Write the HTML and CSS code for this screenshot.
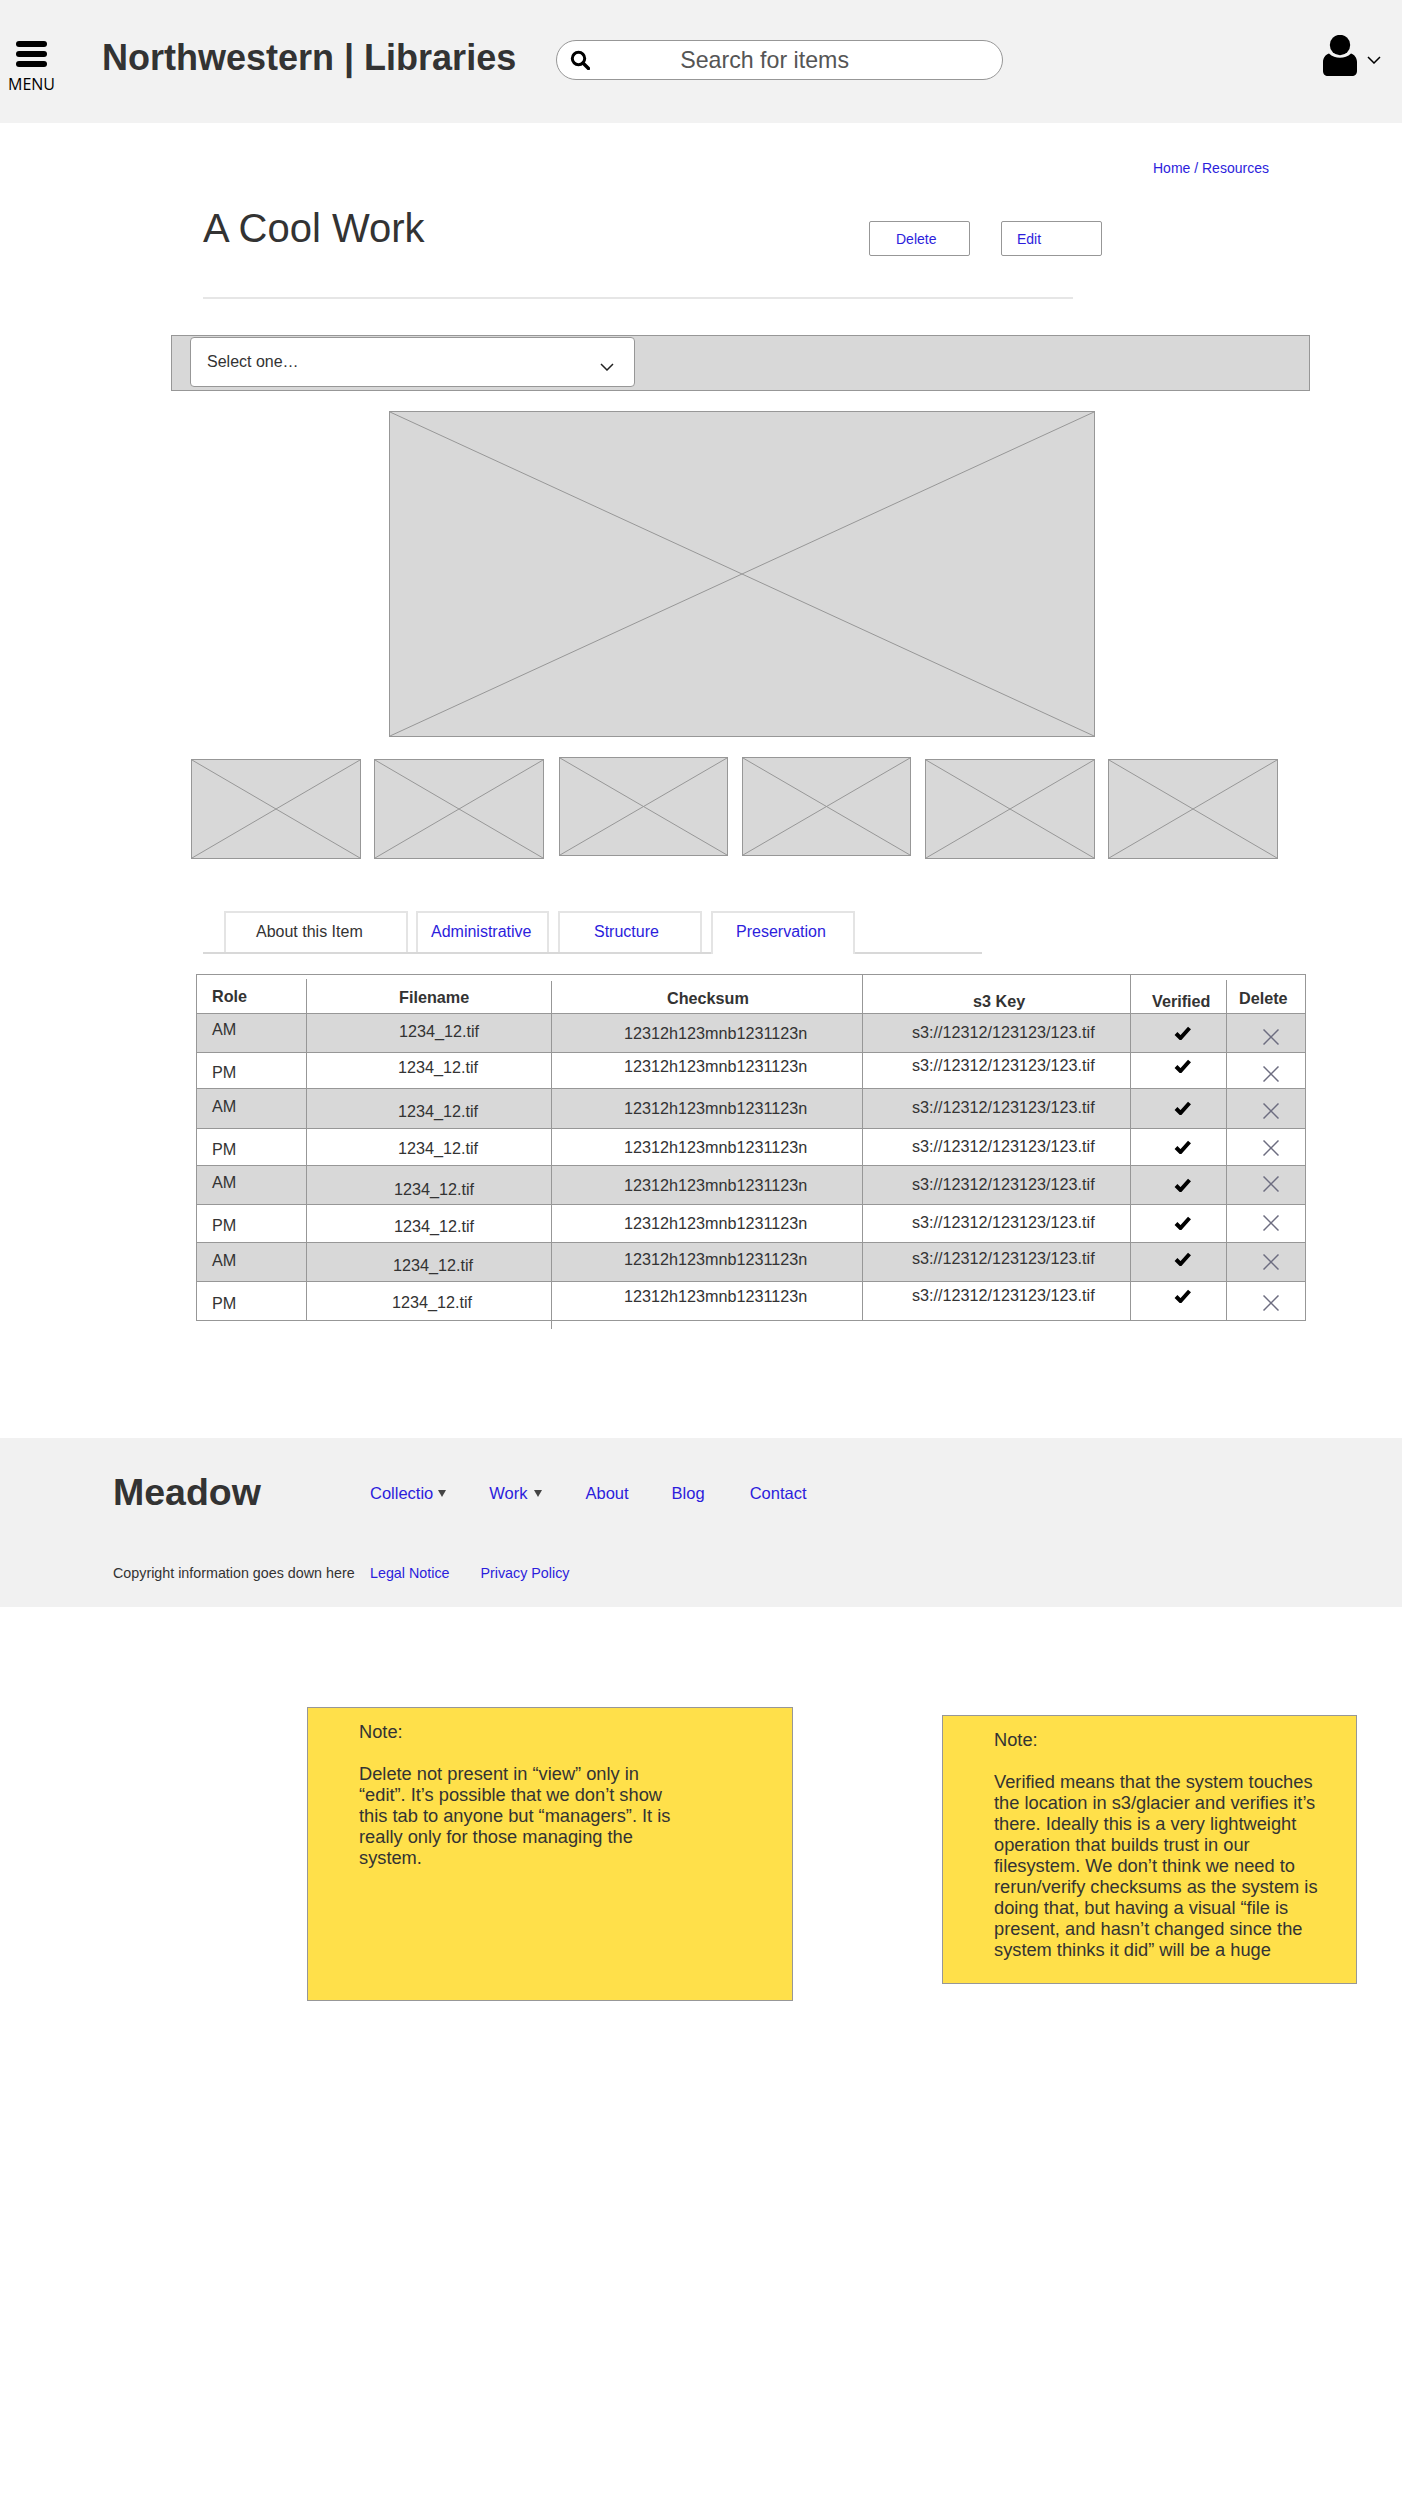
FILE: index.html
```html
<!DOCTYPE html>
<html lang="en">
<head>
<meta charset="UTF-8">
<meta name="viewport" content="width=device-width, initial-scale=1.0">
<title>A Cool Work</title>
<link rel="stylesheet" href="styles.css">
</head>
<body>
<header class="site-header">
  <div class="menu">
    <div class="menu-bars"><span></span><span></span><span></span></div>
    <div class="menu-label">MENU</div>
  </div>
  <div class="site-title">Northwestern | Libraries</div>
  <div class="search">
    <svg class="search-icon" viewBox="0 0 20 20" width="20" height="20">
      <circle cx="8.5" cy="8.5" r="6.2" fill="none" stroke="#000" stroke-width="3"/>
      <line x1="13" y1="13" x2="18.5" y2="18.5" stroke="#000" stroke-width="3.4" stroke-linecap="round"/>
    </svg>
    <span class="search-text">Search for items</span>
  </div>
  <div class="user">
    <svg viewBox="0 0 34 41" width="34" height="41">
      <circle cx="17" cy="10" r="10.2" fill="#000"/>
      <path d="M6 18.5 C9 21.5 13 22.8 17 22.8 C21 22.8 25 21.5 28 18.5 C31.5 19.5 34 23 34 27 L34 36 C34 39 32 41 29 41 L5 41 C2 41 0 39 0 36 L0 27 C0 23 2.5 19.5 6 18.5 Z" fill="#000"/>
    </svg>
    <svg class="user-chevron" viewBox="0 0 14 8" width="14" height="8">
      <polyline points="1,1 7,7 13,1" fill="none" stroke="#000" stroke-width="1.5"/>
    </svg>
  </div>
</header>

<main>
  <div class="crumb"><a>Home / Resources</a></div>
  <div class="title-row">
    <h1>A Cool Work</h1>
    <a class="btn btn-delete">Delete</a>
    <a class="btn btn-edit">Edit</a>
  </div>
  <div class="divider"></div>

  <div class="select-bar">
    <div class="select">
      <span>Select one…</span>
      <svg viewBox="0 0 14 8" width="14" height="8">
        <polyline points="1,1 7,7 13,1" fill="none" stroke="#222" stroke-width="1.5"/>
      </svg>
    </div>
  </div>

  <div class="ph ph-main">
    <svg viewBox="0 0 100 100" preserveAspectRatio="none">
      <line x1="0" y1="0" x2="100" y2="100"/><line x1="100" y1="0" x2="0" y2="100"/>
    </svg>
  </div>

  <div class="thumbs">
    <div class="ph thumb low"><svg viewBox="0 0 100 100" preserveAspectRatio="none"><line x1="0" y1="0" x2="100" y2="100"/><line x1="100" y1="0" x2="0" y2="100"/></svg></div>
    <div class="ph thumb low"><svg viewBox="0 0 100 100" preserveAspectRatio="none"><line x1="0" y1="0" x2="100" y2="100"/><line x1="100" y1="0" x2="0" y2="100"/></svg></div>
    <div class="ph thumb third"><svg viewBox="0 0 100 100" preserveAspectRatio="none"><line x1="0" y1="0" x2="100" y2="100"/><line x1="100" y1="0" x2="0" y2="100"/></svg></div>
    <div class="ph thumb fourth"><svg viewBox="0 0 100 100" preserveAspectRatio="none"><line x1="0" y1="0" x2="100" y2="100"/><line x1="100" y1="0" x2="0" y2="100"/></svg></div>
    <div class="ph thumb low fifth"><svg viewBox="0 0 100 100" preserveAspectRatio="none"><line x1="0" y1="0" x2="100" y2="100"/><line x1="100" y1="0" x2="0" y2="100"/></svg></div>
    <div class="ph thumb low"><svg viewBox="0 0 100 100" preserveAspectRatio="none"><line x1="0" y1="0" x2="100" y2="100"/><line x1="100" y1="0" x2="0" y2="100"/></svg></div>
  </div>

  <nav class="tabs">
    <span class="tab tab-about">About this Item</span>
    <a class="tab tab-admin">Administrative</a>
    <a class="tab tab-structure">Structure</a>
    <a class="tab tab-preservation">Preservation</a>
  </nav>

  <div class="files">
    <div class="row head">
      <div class="cell role t12"><b>Role</b></div>
      <div class="cell h-file"><b>Filename</b></div>
      <div class="cell h-sum"><b>Checksum</b></div>
      <div class="cell h-key t17"><b>s3 Key</b></div>
      <div class="cell h-ok t17"><b>Verified</b></div>
      <div class="cell h-del"><b>Delete</b></div>
    </div>
    <div class="row">
      <div class="cell role t6">AM</div>
      <div class="cell file f92 t8">1234_12.tif</div>
      <div class="cell sum t10">12312h123mnb1231123n</div>
      <div class="cell key t9">s3://12312/123123/123.tif</div>
      <div class="cell ok t12"><svg viewBox="0 0 17 14" width="17" height="14"><polyline points="2,7.5 6.5,12 15.5,2"/></svg></div>
      <div class="cell del t15"><svg viewBox="0 0 16 16" width="16" height="16"><line x1="0.5" y1="0.5" x2="15.5" y2="15.5"/><line x1="15.5" y1="0.5" x2="0.5" y2="15.5"/></svg></div>
    </div>
    <div class="row">
      <div class="cell role t10">PM</div>
      <div class="cell file f91 t5">1234_12.tif</div>
      <div class="cell sum t4">12312h123mnb1231123n</div>
      <div class="cell key t3">s3://12312/123123/123.tif</div>
      <div class="cell ok t6"><svg viewBox="0 0 17 14" width="17" height="14"><polyline points="2,7.5 6.5,12 15.5,2"/></svg></div>
      <div class="cell del t13"><svg viewBox="0 0 16 16" width="16" height="16"><line x1="0.5" y1="0.5" x2="15.5" y2="15.5"/><line x1="15.5" y1="0.5" x2="0.5" y2="15.5"/></svg></div>
    </div>
    <div class="row">
      <div class="cell role t8">AM</div>
      <div class="cell file f91 t13">1234_12.tif</div>
      <div class="cell sum t10">12312h123mnb1231123n</div>
      <div class="cell key t9">s3://12312/123123/123.tif</div>
      <div class="cell ok t12"><svg viewBox="0 0 17 14" width="17" height="14"><polyline points="2,7.5 6.5,12 15.5,2"/></svg></div>
      <div class="cell del t14"><svg viewBox="0 0 16 16" width="16" height="16"><line x1="0.5" y1="0.5" x2="15.5" y2="15.5"/><line x1="15.5" y1="0.5" x2="0.5" y2="15.5"/></svg></div>
    </div>
    <div class="row">
      <div class="cell role t11">PM</div>
      <div class="cell file f91 t10">1234_12.tif</div>
      <div class="cell sum t9">12312h123mnb1231123n</div>
      <div class="cell key t8">s3://12312/123123/123.tif</div>
      <div class="cell ok t11"><svg viewBox="0 0 17 14" width="17" height="14"><polyline points="2,7.5 6.5,12 15.5,2"/></svg></div>
      <div class="cell del t11"><svg viewBox="0 0 16 16" width="16" height="16"><line x1="0.5" y1="0.5" x2="15.5" y2="15.5"/><line x1="15.5" y1="0.5" x2="0.5" y2="15.5"/></svg></div>
    </div>
    <div class="row">
      <div class="cell role t7">AM</div>
      <div class="cell file f87 t14">1234_12.tif</div>
      <div class="cell sum t10">12312h123mnb1231123n</div>
      <div class="cell key t9">s3://12312/123123/123.tif</div>
      <div class="cell ok t12"><svg viewBox="0 0 17 14" width="17" height="14"><polyline points="2,7.5 6.5,12 15.5,2"/></svg></div>
      <div class="cell del t10"><svg viewBox="0 0 16 16" width="16" height="16"><line x1="0.5" y1="0.5" x2="15.5" y2="15.5"/><line x1="15.5" y1="0.5" x2="0.5" y2="15.5"/></svg></div>
    </div>
    <div class="row">
      <div class="cell role t11">PM</div>
      <div class="cell file f87 t12">1234_12.tif</div>
      <div class="cell sum t9">12312h123mnb1231123n</div>
      <div class="cell key t8">s3://12312/123123/123.tif</div>
      <div class="cell ok t11"><svg viewBox="0 0 17 14" width="17" height="14"><polyline points="2,7.5 6.5,12 15.5,2"/></svg></div>
      <div class="cell del t10"><svg viewBox="0 0 16 16" width="16" height="16"><line x1="0.5" y1="0.5" x2="15.5" y2="15.5"/><line x1="15.5" y1="0.5" x2="0.5" y2="15.5"/></svg></div>
    </div>
    <div class="row">
      <div class="cell role t8">AM</div>
      <div class="cell file f86 t13">1234_12.tif</div>
      <div class="cell sum t7">12312h123mnb1231123n</div>
      <div class="cell key t6">s3://12312/123123/123.tif</div>
      <div class="cell ok t9"><svg viewBox="0 0 17 14" width="17" height="14"><polyline points="2,7.5 6.5,12 15.5,2"/></svg></div>
      <div class="cell del t11"><svg viewBox="0 0 16 16" width="16" height="16"><line x1="0.5" y1="0.5" x2="15.5" y2="15.5"/><line x1="15.5" y1="0.5" x2="0.5" y2="15.5"/></svg></div>
    </div>
    <div class="row">
      <div class="cell role t12">PM</div>
      <div class="cell file f85 t11">1234_12.tif</div>
      <div class="cell sum t5">12312h123mnb1231123n</div>
      <div class="cell key t4">s3://12312/123123/123.tif</div>
      <div class="cell ok t7"><svg viewBox="0 0 17 14" width="17" height="14"><polyline points="2,7.5 6.5,12 15.5,2"/></svg></div>
      <div class="cell del t13"><svg viewBox="0 0 16 16" width="16" height="16"><line x1="0.5" y1="0.5" x2="15.5" y2="15.5"/><line x1="15.5" y1="0.5" x2="0.5" y2="15.5"/></svg></div>
    </div>
  </div>
  <div class="files-tick"></div>
</main>

<footer class="site-footer">
  <div class="footer-top">
    <div class="footer-brand">Meadow</div>
    <nav class="footer-nav">
      <a class="has-arrow">Collectio<i class="arrow"></i></a>
      <a class="has-arrow work">Work<i class="arrow"></i></a>
      <a>About</a>
      <a>Blog</a>
      <a class="contact">Contact</a>
    </nav>
  </div>
  <div class="footer-bottom">
    <span class="copyright">Copyright information goes down here</span>
    <a>Legal Notice</a>
    <a class="privacy">Privacy Policy</a>
  </div>
</footer>

<section class="notes">
  <div class="note note-left">
    Note:<br><br>
    Delete not present in “view” only in<br>
    “edit”. It’s possible that we don’t show<br>
    this tab to anyone but “managers”. It is<br>
    really only for those managing the<br>
    system.
  </div>
  <div class="note note-right">
    Note:<br><br>
    Verified means that the system touches<br>
    the location in s3/glacier and verifies it’s<br>
    there. Ideally this is a very lightweight<br>
    operation that builds trust in our<br>
    filesystem. We don’t think we need to<br>
    rerun/verify checksums as the system is<br>
    doing that, but having a visual “file is<br>
    present, and hasn’t changed since the<br>
    system thinks it did” will be a huge
  </div>
</section>
</body>
</html>
```
FILE: styles.css
```css
/* Wireframe page */
* {
  box-sizing: border-box;
}
body {
  margin: 0;
  min-height: 2519px;
  background: #fff;
  color: #333;
  font-family: "Liberation Sans", Arial, sans-serif;
  font-size: 16px;
}
a {
  color: #2c1ddc;
}

/* Header */
.site-header {
  display: flex;
  align-items: flex-start;
  height: 123px;
  background: #f2f2f2;
}
.menu {
  width: 45px;
  margin-left: 8px;
  padding-top: 41px;
}
.menu-bars {
  display: flex;
  flex-direction: column;
  gap: 4px;
  width: 31px;
  margin: 0 0 8px 8px;
}
.menu-bars span {
  height: 6px;
  border-radius: 3px;
  background: #000;
}
.menu-label {
  font-family: "Open Sans", sans-serif;
  font-size: 16px;
  line-height: 18px;
  color: #000;
  white-space: nowrap;
}
.site-title {
  margin-left: 49px;
  padding-top: 38px;
  font-size: 36px;
  font-weight: bold;
  line-height: 40px;
  white-space: nowrap;
}
.search {
  display: flex;
  align-items: center;
  width: 447px;
  height: 40px;
  margin: 40px 0 0 40px;
  padding-left: 13px;
  border: 1px solid #979797;
  border-radius: 20px;
  background: #fff;
}
.search-text {
  margin-left: 90px;
  font-size: 23.2px;
  color: #555;
}
.user {
  display: flex;
  align-items: center;
  margin: 35px 0 0 auto;
  padding-right: 21px;
}
.user-chevron {
  margin: 9px 0 0 10px;
}

/* Title area */
.crumb {
  margin: 36px 0 0 1153px;
  font-size: 14px;
  line-height: 18px;
}
.title-row {
  display: flex;
  align-items: flex-start;
  height: 92px;
  margin: 28px 0 0 203px;
}
h1 {
  width: 666px;
  margin: 0;
  font-size: 40px;
  font-weight: normal;
  line-height: 46px;
}
.btn {
  height: 35px;
  margin-top: 16px;
  border: 1px solid #979797;
  border-radius: 2px;
  font-size: 14px;
  line-height: 35px;
}
.btn-delete {
  width: 101px;
  padding-left: 26px;
}
.btn-edit {
  width: 101px;
  margin-left: 31px;
  padding-left: 15px;
}
.divider {
  width: 870px;
  height: 2px;
  margin-left: 203px;
  background: #e6e6e6;
}

/* Select bar */
.select-bar {
  width: 1139px;
  height: 56px;
  margin: 36px 0 0 171px;
  padding: 1px 0 0 18px;
  border: 1px solid #979797;
  background: #d8d8d8;
}
.select {
  display: flex;
  align-items: center;
  justify-content: space-between;
  width: 445px;
  height: 50px;
  padding: 0 20px 0 16px;
  border: 1px solid #979797;
  border-radius: 4px;
  background: #fff;
}
.select svg {
  margin-top: 9px;
}

/* Placeholders */
.ph {
  border: 1px solid #979797;
  background: #d8d8d8;
}
.ph svg {
  display: block;
  width: 100%;
  height: 100%;
}
.ph line {
  stroke: #979797;
  stroke-width: 1;
  vector-effect: non-scaling-stroke;
}
.ph-main {
  width: 706px;
  height: 326px;
  margin: 20px 0 0 389px;
}
.thumbs {
  display: flex;
  align-items: flex-start;
  gap: 13px;
  height: 102px;
  margin: 20px 0 0 191px;
}
.thumb {
  width: 170px;
  height: 99px;
}
.thumb.low {
  height: 100px;
  margin-top: 2px;
}
.thumb.third {
  width: 169px;
  margin-left: 2px;
}
.thumb.fourth {
  width: 169px;
  margin-left: 1px;
}
.thumb.fifth {
  margin-left: 1px;
}

/* Tabs */
.tabs {
  display: flex;
  align-items: flex-end;
  width: 779px;
  height: 43px;
  margin: 52px 0 0 203px;
  padding-left: 21px;
  border-bottom: 2px solid #d8d8d8;
}
.tab {
  height: 41px;
  padding-top: 10px;
  border: 2px solid #e4e4e4;
  border-bottom: 0;
  line-height: 18px;
}
.tab-about {
  width: 184px;
  padding-left: 30px;
}
.tab-admin {
  width: 133px;
  margin-left: 8px;
  padding-left: 13px;
}
.tab-structure {
  width: 144px;
  margin-left: 9px;
  padding-left: 34px;
}
.tab-preservation {
  width: 144px;
  height: 43px;
  margin: 0 0 -2px 9px;
  padding-left: 23px;
  background: #fff;
}

/* Files table */
.files {
  width: 1110px;
  margin: 20px 0 0 196px;
  border: 1px solid #979797;
  font-size: 16.2px;
  line-height: 18px;
}
.row {
  display: grid;
  grid-template-columns: 109px 245px 311px 268px 96px 1fr;
  border-bottom: 1px solid #979797;
}
.row:last-child {
  border-bottom: 0;
}
.row:nth-child(even) {
  background: #d8d8d8;
}
.row:nth-child(1) { height: 39px; }
.row:nth-child(2) { height: 39px; }
.row:nth-child(3) { height: 36px; }
.row:nth-child(4) { height: 40px; }
.row:nth-child(5) { height: 37px; }
.row:nth-child(6) { height: 39px; }
.row:nth-child(7) { height: 38px; }
.row:nth-child(8) { height: 39px; }
.row:nth-child(9) { height: 38px; }
.cell {
  border-left: 1px solid #979797;
  white-space: nowrap;
}
.cell svg {
  display: block;
}
.role {
  padding-left: 15px;
  border-left: 0;
}
.sum {
  padding-left: 72px;
}
.key {
  padding-left: 49px;
}
.ok {
  padding-left: 43px;
}
.ok polyline {
  fill: none;
  stroke: #000;
  stroke-width: 4;
}
.del {
  padding-left: 36px;
}
.del line {
  stroke: #6d6d80;
  stroke-width: 1.5;
}
.h-file {
  margin-top: 4px;
  padding: 9px 0 0 92px;
}
.h-sum {
  margin-top: 6px;
  padding: 8px 0 0 115px;
}
.h-key {
  padding-left: 110px;
}
.h-ok {
  padding-left: 21px;
}
.h-del {
  margin-top: 5px;
  padding: 9px 0 0 12px;
}
.files-tick {
  width: 1px;
  height: 8px;
  margin-left: 551px;
  background: #979797;
}

/* Filename column drifts a little from row to row */
.f85 { padding-left: 85px; }
.f86 { padding-left: 86px; }
.f87 { padding-left: 87px; }
.f91 { padding-left: 91px; }
.f92 { padding-left: 92px; }

.t3 { padding-top: 3px; }
.t4 { padding-top: 4px; }
.t5 { padding-top: 5px; }
.t6 { padding-top: 6px; }
.t7 { padding-top: 7px; }
.t8 { padding-top: 8px; }
.t9 { padding-top: 9px; }
.t10 { padding-top: 10px; }
.t11 { padding-top: 11px; }
.t12 { padding-top: 12px; }
.t13 { padding-top: 13px; }
.t14 { padding-top: 14px; }
.t15 { padding-top: 15px; }
.t17 { padding-top: 17px; }

/* Footer */
.site-footer {
  height: 169px;
  margin-top: 109px;
  padding: 34px 0 0 113px;
  background: #f1f1f1;
}
.footer-top {
  display: flex;
  align-items: center;
}
.footer-brand {
  width: 257px;
  font-size: 37.5px;
  font-weight: bold;
  line-height: 40px;
}
.footer-nav {
  display: flex;
  align-items: center;
  gap: 43px;
  padding-top: 3px;
  font-size: 16.5px;
}
.has-arrow {
  display: flex;
  align-items: center;
}
.arrow {
  width: 0;
  height: 0;
  margin-left: 5px;
  border-top: 7px solid #444;
  border-left: 4.5px solid transparent;
  border-right: 4.5px solid transparent;
}
.work .arrow {
  margin-left: 7px;
}
.contact {
  margin-left: 2px;
}
.footer-bottom {
  display: flex;
  margin-top: 52px;
  font-size: 14.3px;
  line-height: 18px;
}
.copyright {
  width: 257px;
}
.privacy {
  margin-left: 31px;
}

/* Sticky notes */
.notes {
  display: flex;
  align-items: flex-start;
  margin-top: 100px;
  padding-left: 307px;
}
.note {
  padding-top: 13px;
  border: 1px solid #979797;
  background: #ffe04a;
  font-size: 18.25px;
  line-height: 21px;
}
.note-left {
  width: 486px;
  height: 294px;
  padding-left: 51px;
}
.note-right {
  width: 415px;
  height: 269px;
  margin: 8px 0 0 149px;
  padding-left: 51px;
}
```
